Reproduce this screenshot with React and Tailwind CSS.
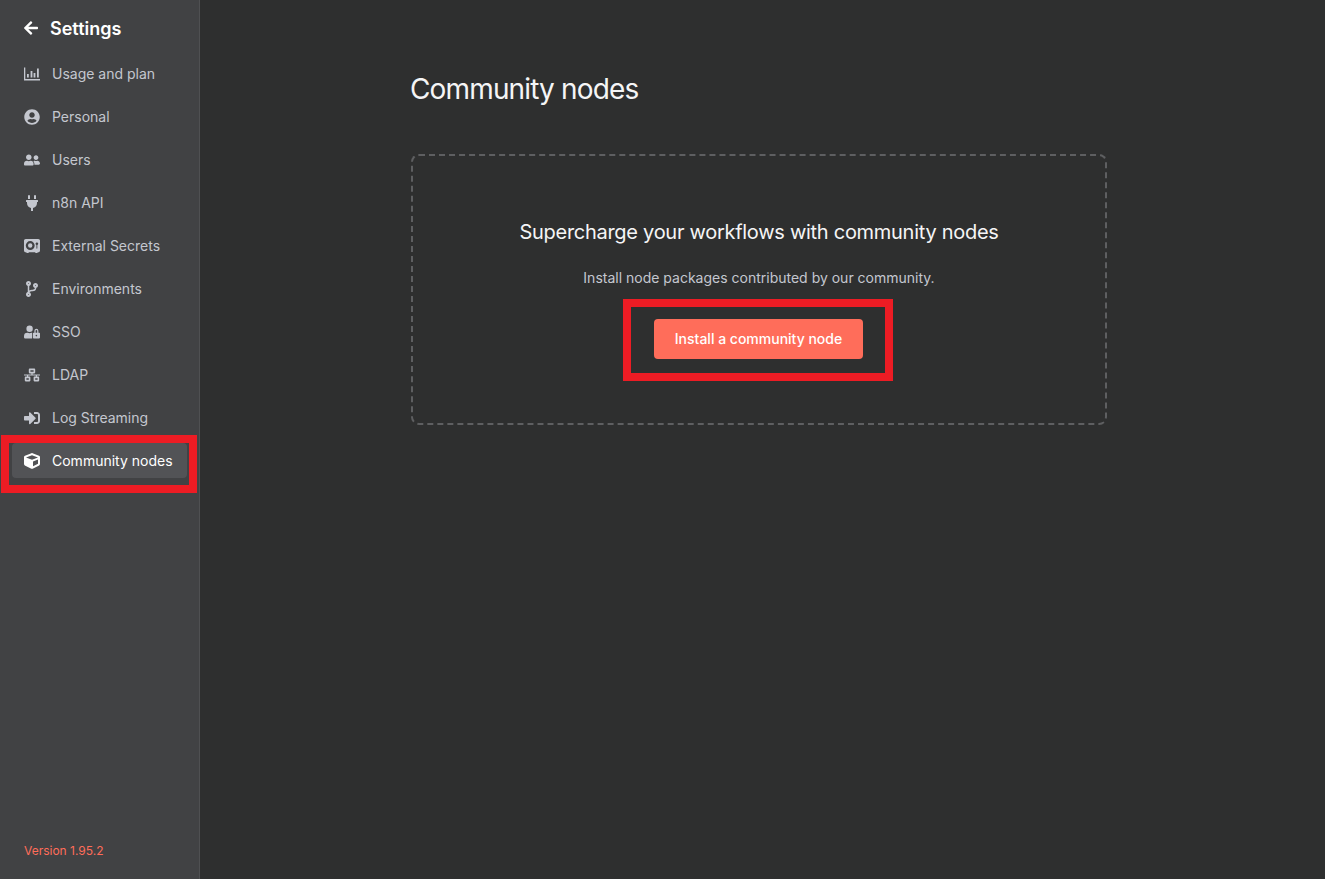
import React from 'react';
import {
  FaArrowLeft,
  FaUserCircle,
  FaUserFriends,
  FaPlug,
  FaCodeBranch,
  FaUserLock,
  FaNetworkWired,
  FaSignInAlt,
  FaCube,
} from 'react-icons/fa';
import { FaVault } from 'react-icons/fa6';

const UsageIcon = ({ className }) => (
  <svg viewBox="0 0 16 13" fill="currentColor" className={className}>
    <path d="M0 0h1.3v11.4H16V13H0z" />
    <path d="M3 6.5h1.8v3.6H3zM6.6 3.5h1.8v6.6H6.6zM9.6 5.5h1.8v4.6H9.6zM13 1h1.8v9.1H13z" />
  </svg>
);

const items = [
  { label: 'Usage and plan', icon: UsageIcon },
  { label: 'Personal', icon: FaUserCircle },
  { label: 'Users', icon: FaUserFriends },
  { label: 'n8n API', icon: FaPlug },
  { label: 'External Secrets', icon: FaVault },
  { label: 'Environments', icon: FaCodeBranch },
  { label: 'SSO', icon: FaUserLock },
  { label: 'LDAP', icon: FaNetworkWired },
  { label: 'Log Streaming', icon: FaSignInAlt },
  { label: 'Community nodes', icon: FaCube, active: true },
];

const Sidebar = () => (
  <aside className="w-[200px] shrink-0 flex flex-col bg-[#414244] border-r border-[#4f5052]">
    <div className="flex items-center h-[56px] pl-[23px] text-white">
      <FaArrowLeft className="text-[16px] mr-[11px]" />
      <span className="text-[18px] font-semibold">Settings</span>
    </div>
    <nav className="flex flex-col gap-[8px] px-[12px]">
      {items.map(({ label, icon: Icon, active }) => (
        <div
          key={label}
          className={`flex items-center h-[35px] pl-[12px] rounded text-[14px] ${
            active ? 'bg-[#525356] text-white' : 'text-[#c4c7cf]'
          }`}
        >
          <span className="w-[16px] mr-[12px] flex justify-center">
            <Icon className="w-[16px] h-[16px]" />
          </span>
          {label}
        </div>
      ))}
    </nav>
    <div className="mt-auto pl-[24px] pb-[19px] text-[12px] text-[#ff6d5a]">Version 1.95.2</div>
  </aside>
);

export default function App() {
  return (
    <div className="relative flex h-[879px] overflow-hidden bg-[#2e2f2f] font-['Inter',sans-serif]">
      <Sidebar />
      <main className="flex-1 pl-[211px] pt-[70px]">
        <h1 className="-ml-[1px] text-[28px] leading-[38px] tracking-[-0.85px] text-[#f5f5f6]">Community nodes</h1>
        <div className="mt-[46px] w-[696px] h-[271px] flex flex-col items-center rounded-lg border-2 border-dashed border-[#5e5f61] pt-[63px]">
          <h2 className="text-[20px] leading-[26px] tracking-[-0.28px] text-[#f5f5f6]">
            Supercharge your workflows with community nodes
          </h2>
          <p className="mt-[23px] text-[14px] leading-[20px] text-[#c4c7cf]">
            Install node packages contributed by our community.
          </p>
          <button className="mt-[31px] mr-[1px] w-[209px] h-[40px] pb-[2px] rounded bg-[#ff6d5a] text-[14px] font-medium text-white">
            Install a community node
          </button>
        </div>
      </main>
      {/* Annotation boxes drawn on top of the screenshot */}
      <div className="absolute left-[1px] top-[435px] w-[196px] h-[58px] border-[8px] border-[#ed1c24]" />
      <div className="absolute left-[623px] top-[299px] w-[270px] h-[82px] border-[8px] border-[#ed1c24]" />
    </div>
  );
}
